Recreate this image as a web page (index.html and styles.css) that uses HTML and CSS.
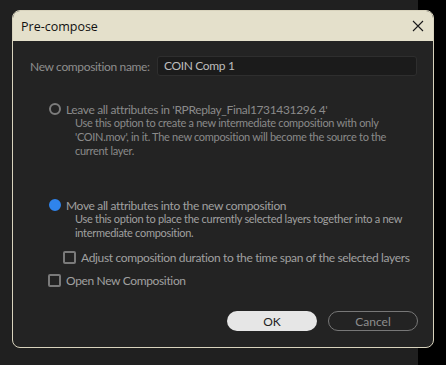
FILE: index.html
```html
<!DOCTYPE html>
<html>
<head>
    <title>Pre-compose</title>
    <link rel="stylesheet" href="styles.css">
</head>
<body>
    <div class="dialog">
        <div class="titlebar">
            <span class="title">Pre-compose</span>
            <svg class="close" width="12" height="12" viewBox="0 0 12 12">
                <path d="M1 1 L11 11 M11 1 L1 11" stroke="#1a1a1a" stroke-width="1.1" fill="none"/>
            </svg>
        </div>

        <div class="content">
            <div class="name-row">
                <label class="name-label">New composition name:</label>
                <div class="name-input">COIN Comp 1</div>
            </div>

            <!-- option 1 -->
            <div class="option dim">
                <div class="option-head">
                    <span class="radio"></span>
                    <span>Leave all attributes in 'RPReplay_Final1731431296 4'</span>
                </div>
                <div class="desc">
                    Use this option to create a new intermediate composition with only<br>
                    'COIN.mov', in it. The new composition will become the source to the<br>
                    current layer.
                </div>
            </div>

            <!-- option 2 -->
            <div class="option second">
                <div class="option-head">
                    <span class="radio checked"></span>
                    <span>Move all attributes into the new composition</span>
                </div>
                <div class="desc">
                    Use this option to place the currently selected layers together into a new<br>
                    intermediate composition.
                </div>
            </div>

            <div class="check-row indent">
                <span class="checkbox"></span>
                <span>Adjust composition duration to the time span of the selected layers</span>
            </div>
            <div class="check-row">
                <span class="checkbox"></span>
                <span>Open New Composition</span>
            </div>

            <div class="buttons">
                <button class="btn ok">OK</button>
                <button class="btn cancel">Cancel</button>
            </div>
        </div>
    </div>
</body>
</html>
```

FILE: styles.css
```css
body {
    margin: 0;
    padding: 10px 0 0 12px;
    height: 365px;
    box-sizing: border-box;
    overflow: hidden;
    background: linear-gradient(to right, #202020 418px, #000000 418px);
    font-family: Lato, "Noto Sans", sans-serif;
}

.dialog {
    width: 422px;
    height: 338px;
    box-sizing: border-box;
    border: 1px solid #d8d3bd;
    border-radius: 8px;
    overflow: hidden;
    background-color: #232323;
    display: flex;
    flex-direction: column;
}

.titlebar {
    height: 30px;
    background-color: #e4e0cb;
    display: flex;
    align-items: center;
    justify-content: space-between;
    padding: 0 9px 0 8px;
    flex-shrink: 0;
}

.title {
    font-family: "Open Sans", "Noto Sans", sans-serif;
    font-size: 12.5px;
    color: #111111;
}

.content {
    flex: 1;
    padding: 15px 15px 0 17px;
    font-size: 12px;
    letter-spacing: -0.35px;
    color: #a0a0a0;
    white-space: nowrap;
}

.name-row {
    display: flex;
    align-items: center;
    height: 20px;
}

.name-label {
    width: 127px;
    color: #8e8e8e;
}

.name-input {
    flex: 1;
    height: 20px;
    box-sizing: border-box;
    margin-right: 1px;
    padding: 0 6px;
    line-height: 18px;
    background-color: #1b1b1b;
    border: 1px solid #2e2e2e;
    border-radius: 3px;
    color: #bdbdbd;
}

.option {
    margin-top: 26px;
    margin-left: 19px;
}

.option.second {
    margin-top: 40px;
}

.option-head {
    display: flex;
    align-items: center;
    gap: 5px;
    height: 14px;
}

.dim {
    color: #8a8a8a;
}

.radio {
    width: 8px;
    height: 8px;
    border: 2px solid #7c7c7c;
    border-radius: 50%;
    display: inline-block;
}

.radio.checked {
    background-color: #2f84ec;
    border-color: #2f84ec;
}

.desc {
    margin-left: 26px;
    font-size: 11px;
    letter-spacing: -0.3px;
    line-height: 14px;
    margin-top: 0;
}

.check-row {
    display: flex;
    align-items: center;
    gap: 5px;
    height: 16px;
    margin-left: 18px;
    margin-top: 7px;
}

.check-row.indent {
    margin-left: 33px;
    margin-top: 9px;
}

.checkbox {
    width: 9px;
    height: 9px;
    border: 2px solid #7a7a7a;
    border-radius: 2px;
    display: inline-block;
    flex-shrink: 0;
}

.buttons {
    display: flex;
    justify-content: flex-end;
    gap: 11px;
    margin-top: 23px;
}

.btn {
    width: 90px;
    height: 20px;
    border-radius: 10px;
    font-family: Lato, "Noto Sans", sans-serif;
    font-size: 12px;
    padding: 0;
}

.btn.ok {
    background-color: #e6e6e6;
    border: none;
    color: #222222;
}

.btn.cancel {
    background-color: transparent;
    border: 1px solid #777777;
    color: #8e8e8e;
}
```
